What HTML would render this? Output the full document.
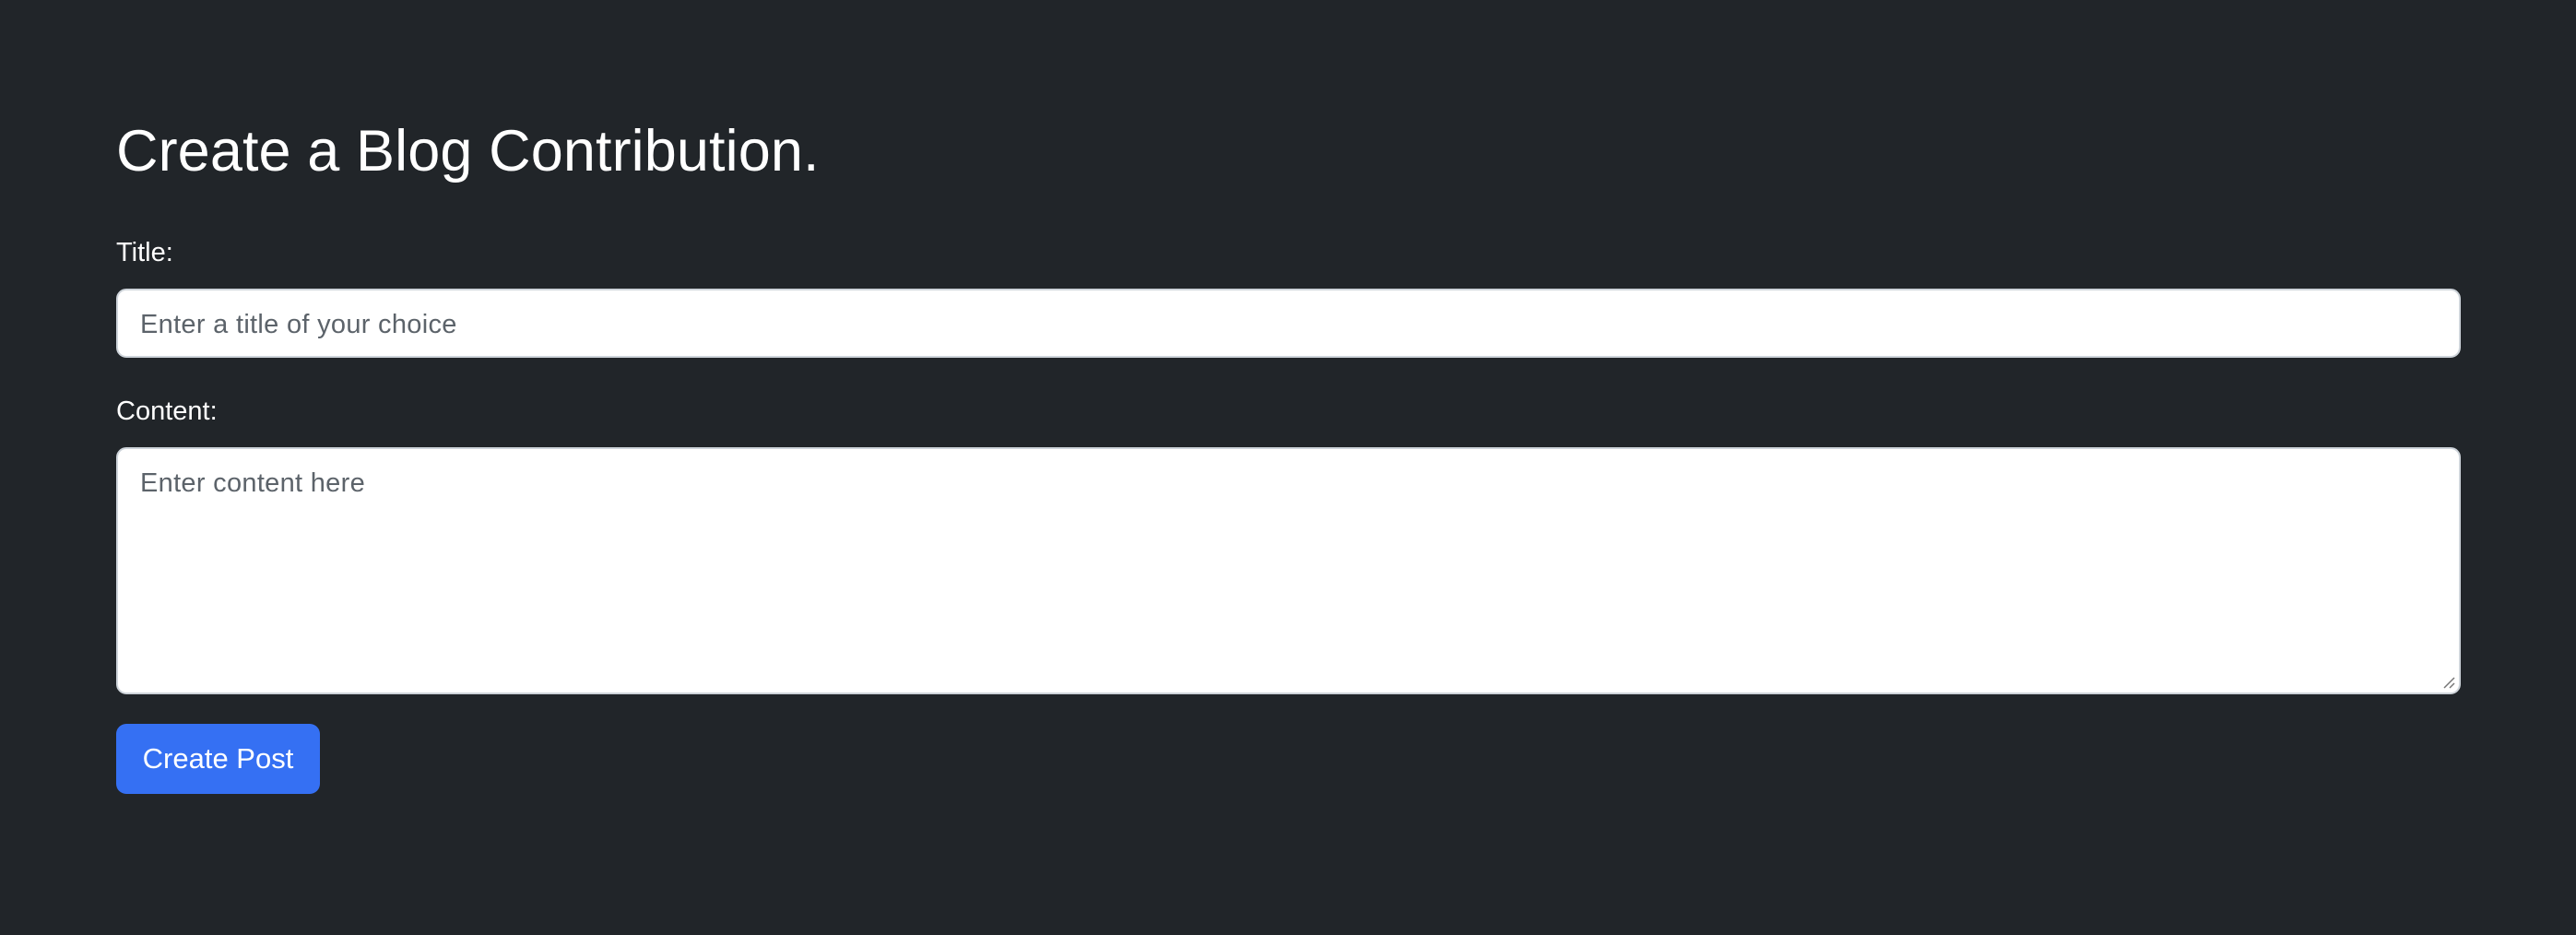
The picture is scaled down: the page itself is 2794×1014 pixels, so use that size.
<!DOCTYPE html>
<html><head><meta charset="utf-8"><style>
html,body{margin:0;padding:0;background:#212529;width:2794px;height:1014px;overflow:hidden;font-family:"Liberation Sans",Arial,sans-serif;color:#fff}
.abs{position:absolute;white-space:nowrap}
h1{position:absolute;left:126px;top:124px;margin:0;font-size:63px;font-weight:400;line-height:80px;letter-spacing:0.1px}
.lbl{font-size:29px;line-height:36px}
.box{position:absolute;left:126px;width:2543px;background:#fff;border:2px solid #ced4da;border-radius:11px;box-sizing:border-box}
.ph{color:#5c636a;font-size:29px;line-height:36px;letter-spacing:0.3px}
.btn{position:absolute;left:126px;top:785px;width:221px;height:76px;background:#3570f3;border-radius:11px;font-size:31px;line-height:76px;text-align:center;color:#fff}
</style></head><body>
<h1>Create a Blog Contribution.</h1>
<div class="abs lbl" style="left:126px;top:256px">Title:</div>
<div class="box" style="top:313px;height:75px"><div class="abs ph" style="left:24px;top:19px">Enter a title of your choice</div></div>
<div class="abs lbl" style="left:126px;top:428px">Content:</div>
<div class="box" style="top:485px;height:268px"><div class="abs ph" style="left:24px;top:19px">Enter content here</div>
<svg class="abs" style="right:4px;bottom:4px" width="16" height="16"><path d="M15 4L4 15M15 10L10 15" stroke="#777" stroke-width="1.5"/></svg></div>
<div class="btn">Create Post</div>
</body></html>
